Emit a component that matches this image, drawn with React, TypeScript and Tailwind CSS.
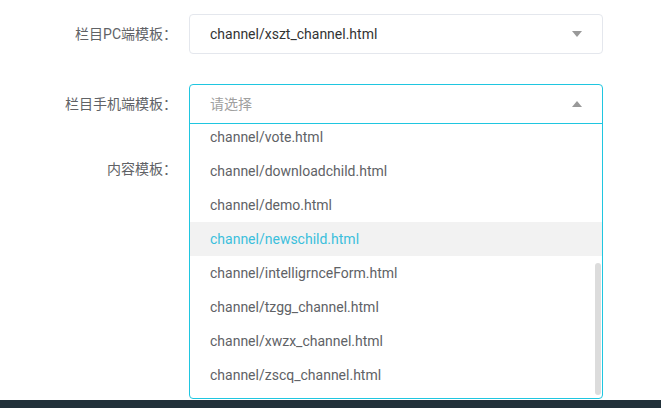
import React from "react";

const items = [
  "channel/vote.html",
  "channel/downloadchild.html",
  "channel/demo.html",
  "channel/newschild.html",
  "channel/intelligrnceForm.html",
  "channel/tzgg_channel.html",
  "channel/xwzx_channel.html",
  "channel/zscq_channel.html",
];

function Tri({ up }: { up?: boolean }) {
  return (
    <svg width="10" height="6" viewBox="0 0 10 6" className="shrink-0">
      {up ? <path d="M0 6 L5 0 L10 6 Z" fill="#999999" /> : <path d="M0 0 L10 0 L5 6 Z" fill="#999999" />}
    </svg>
  );
}

export default function App() {
  return (
    <div
      className="w-[661px] h-[408px] bg-white flex flex-col overflow-hidden text-[14px]"
      style={{ fontFamily: 'Roboto, "Noto Sans CJK SC", sans-serif' }}
    >
      <div className="h-[400px] pt-[14px] flex flex-col">
        <div className="flex items-center">
          <div className="w-[189px] pr-[12px] text-right text-[#606266]">栏目PC端模板：</div>
          <div className="w-[414px] h-[40px] border border-[#e4e7ed] rounded-[4px] flex items-center justify-between pl-[20px] pr-[20px] text-[#333333]">
            <span>channel/xszt_channel.html</span>
            <Tri />
          </div>
        </div>

        <div className="flex items-center mt-[30px]">
          <div className="w-[189px] pr-[12px] text-right text-[#606266]">栏目手机端模板：</div>
          <div className="relative w-[414px] h-[40px]">
            <div className="absolute left-0 top-0 z-10 w-[414px] h-[315px] border border-[#1fc6e0] rounded-[4px] bg-white flex flex-col overflow-hidden">
              <div className="h-[39px] shrink-0 border-b border-[#1fc6e0] flex items-center justify-between pl-[20px] pr-[20px] text-[#a0a0a0]">
                <span>请选择</span>
                <Tri up />
              </div>
              <div className="relative h-[274px] overflow-hidden">
                <div className="flex flex-col -mt-[4px]">
                  {items.map((t, i) => (
                    <div
                      key={t}
                      className={
                        i === 3
                          ? "h-[34px] flex items-center pl-[20px] bg-[#f2f2f2] text-[#3bbfdc]"
                          : "h-[34px] flex items-center pl-[20px] text-[#606266]"
                      }
                    >
                      {t}
                    </div>
                  ))}
                </div>
                <div className="absolute right-[1px] top-[139px] w-[6px] h-[132px] rounded-full bg-[#dcdcdc]" />
              </div>
            </div>
          </div>
        </div>

        <div className="flex items-center mt-[25px] h-[40px]">
          <div className="w-[189px] pr-[12px] text-right text-[#606266]">内容模板：</div>
        </div>
      </div>
      <div className="h-[8px] bg-[#22313a]" />
    </div>
  );
}
